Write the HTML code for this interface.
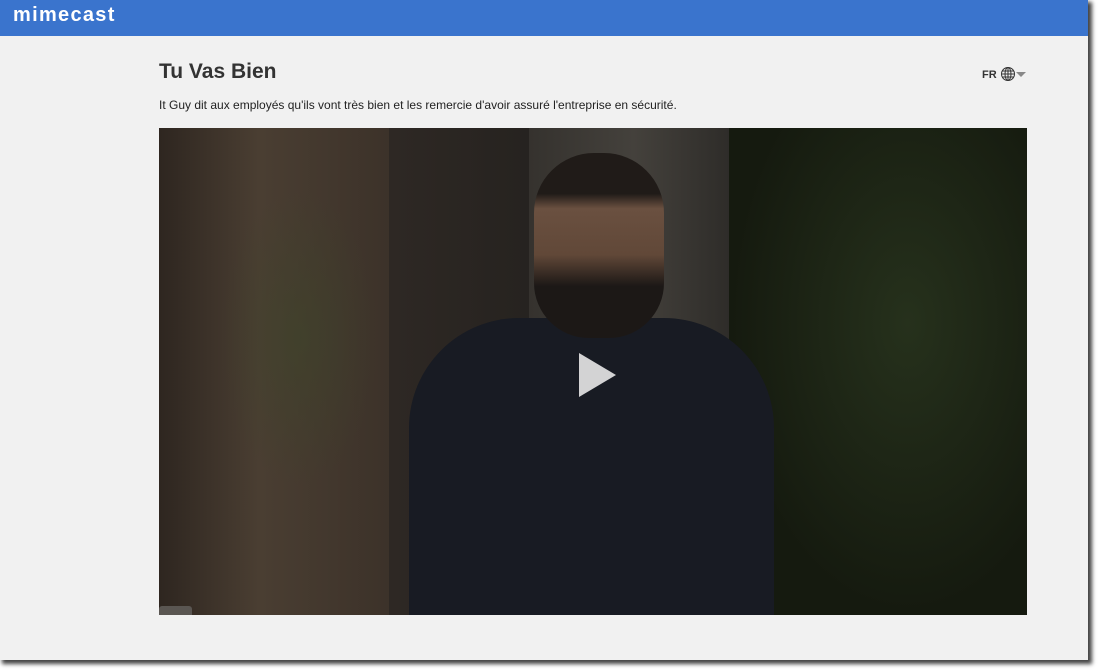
<!DOCTYPE html>
<html><head><meta charset="utf-8"><style>
html,body{margin:0;padding:0;width:1098px;height:670px;background:#fff;overflow:hidden;font-family:"Liberation Sans",Arial,sans-serif}
#page{position:absolute;left:0;top:0;width:1088px;height:660px;background:#f1f1f1;box-shadow:3px 3px 4px 1px #444}
#hdr{position:absolute;left:0;top:0;width:1088px;height:36px;background:#3a74cd}
#logo{position:absolute;left:13px;top:4px;color:#fff;font-weight:bold;font-size:20px;letter-spacing:1.3px}
h1{position:absolute;left:159px;top:60px;margin:0;font-size:21px;color:#333;font-weight:bold}
#desc{position:absolute;left:159px;top:98px;font-size:12px;color:#222}
#lang{position:absolute;left:982px;top:66px;font-size:11px;font-weight:bold;color:#333}
#vid{position:absolute;left:159px;top:128px;width:868px;height:487px;overflow:hidden;background:#231f1b}
.b{position:absolute}
</style></head><body>
<div id="page">
<div id="hdr"><div id="logo">mimecast</div></div>
<h1>Tu Vas Bien</h1>
<div id="desc">It Guy dit aux employés qu'ils vont très bien et les remercie d'avoir assuré l'entreprise en sécurité.</div>
<div id="lang">FR <svg width="16" height="16" viewBox="0 0 16 16" style="vertical-align:-4px" fill="none" stroke="#333" stroke-width="1"><circle cx="8" cy="8" r="6.5"/><ellipse cx="8" cy="8" rx="3" ry="6.5"/><path d="M1.5 8h13M2.5 5h11M2.5 11h11M8 1.5v13"/></svg><svg width="10" height="6" viewBox="0 0 10 6" style="vertical-align:0px"><path d="M0 0h10L5 5z" fill="#888"/></svg></div>
<div id="vid">
 <div class="b" style="left:0;top:0;width:250px;height:487px;background:linear-gradient(90deg,#2e2620,#4a3e32 40%,#3a3028)"></div>
 <div class="b" style="left:230px;top:0;width:160px;height:487px;background:linear-gradient(90deg,#2e2824,#25221f)"></div>
 <div class="b" style="left:370px;top:0;width:210px;height:487px;background:linear-gradient(90deg,#35322e,#44413c 50%,#2c2a27)"></div>
 <div class="b" style="left:570px;top:0;width:298px;height:487px;background:radial-gradient(ellipse at 60% 40%,#26311c,#151a0f 70%)"></div>
 <div class="b" style="left:60px;top:60px;width:160px;height:300px;background:radial-gradient(ellipse,rgba(60,70,40,.5),transparent 70%)"></div>
 <div class="b" style="left:250px;top:190px;width:365px;height:320px;border-radius:110px 110px 0 0;background:#181b23"></div>
 <div class="b" style="left:375px;top:25px;width:130px;height:185px;border-radius:60px 60px 55px 55px;background:linear-gradient(#201b18 22%,#6a5040 30%,#614838 55%,#1c1816 72%)"></div>
 <div class="b" style="left:420px;top:225px;width:0;height:0;border-left:37px solid #e8e8e8;border-top:22px solid transparent;border-bottom:22px solid transparent;opacity:.9"></div>
 <div class="b" style="left:0;top:478px;width:33px;height:12px;background:#5a5652;border-radius:3px 3px 0 0"></div>
</div>
</div>
</body></html>
